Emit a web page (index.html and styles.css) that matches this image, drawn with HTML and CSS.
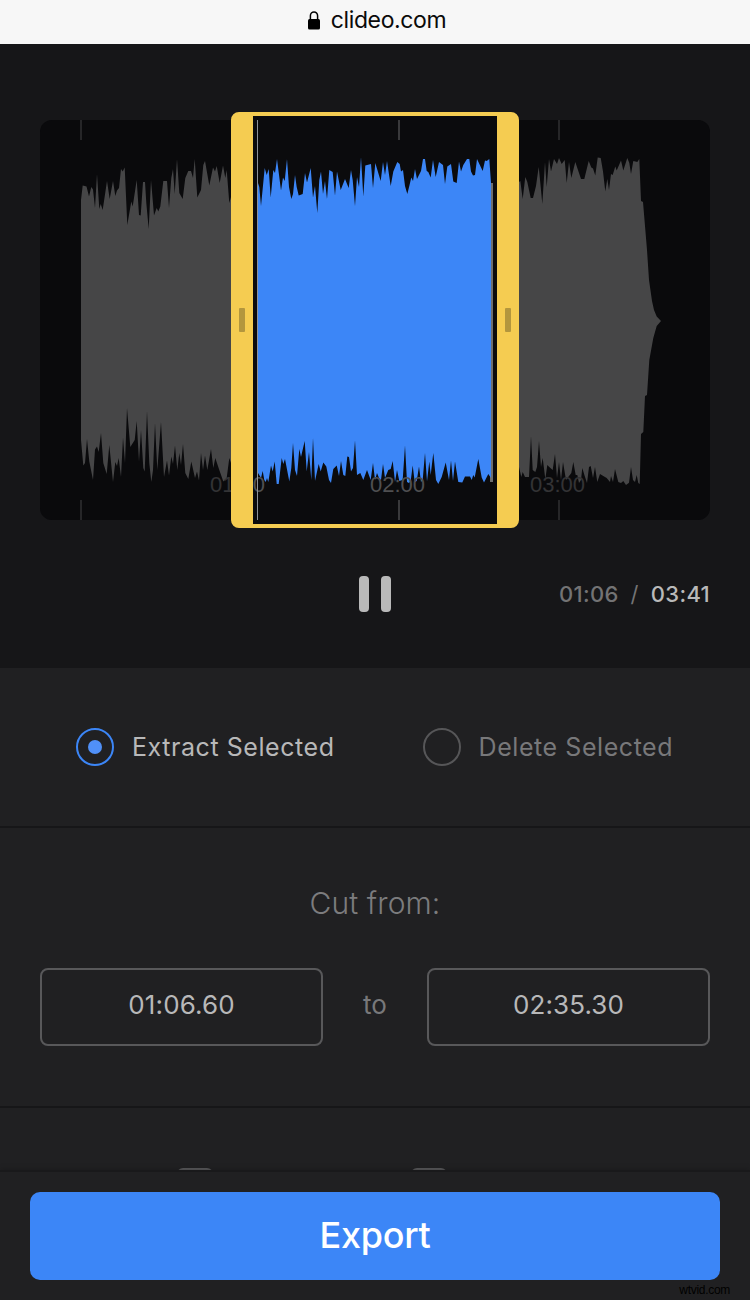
FILE: index.html
```html
<!DOCTYPE html>
<html lang="en">
<head>
	<meta charset="utf-8">
	<title>Cut audio</title>
	<link rel="stylesheet" href="styles.css">
</head>
<body>

<header class="address">
	<svg class="lock" width="12" height="19" viewBox="0 0 12 19">
		<path d="M2.4 9V4.8a3.6 3.9 0 0 1 7.2 0V9" fill="none" stroke="#000" stroke-width="1.5"/>
		<rect x="0" y="8" width="12" height="10.4" rx="1.5"/>
	</svg>
	<span>clideo.com</span>
</header>

<section class="editor">
	<div class="track">
		<svg class="wave" width="670" height="400" viewBox="40 120 670 400">
			<!-- grid -->
			<path class="tick" d="M81 120v20M81 500v20M399 120v20M399 500v20M559 120v20M559 500v20"/>

			<!-- before selection -->
			<path class="rest" d="M81 321V200L82.7 185.5 86.5 186.5 89 196.5 91.3 187 93 189.5 95 208 97 174 99.3 209 100.7 204 102.7 210 107 181 109.7 199 113 181 115.3 196 117 190.5 119 188 121 169 122.7 171.5 124.7 167.5 127.3 225 131.3 201.5 132.7 206.5 136.7 180 139 215 140.7 215.5 143 182 145 182 146.3 203 148.7 229 151 180 154 215.5 156.7 208 158.3 211.5 160.3 206.5 163.3 181 167 181 169 208 171.3 178 173 169 174.7 194 177 159 179.3 193 182.7 199 185.3 178 188.3 171 191 171 193 178 194.7 159 197.3 197.5 201 190 203.3 165 205 161 209.3 185.5 213 167.5 215 171.5 216.7 166 219.7 183 223 165.5 225.3 178 226.7 170 229.3 203 231 197 240 180V321Z"/>
			<path class="rest" d="M81 321V440L83.3 465.5 85 463 87 439 89.3 461.5 93 480 95 449.5 97 446.5 98.7 452 101 433 103.3 463 106.7 474 109.3 445 113 482 115.3 462 117 466 118.7 458 121 477 123 437.5 125 463 127 408 130.3 447 134.7 440 136.7 421 139 461.5 141 430 143.3 468 144.7 471.5 147 411 149.3 463 151.3 482 153 470 155 423 157.3 470 161 422 164 477 167 460.5 169 475.5 171.3 456.5 173 464 175 445.5 177.3 470 179.3 453 181 465 183 444 185.3 473 188.3 479 191.3 461.5 195 478 197 471.5 199 480.5 201 453 203 470 205 455.5 207.3 470 211 449 213.3 468 215.3 458 219.3 470 223.3 481.5 226.7 478 229.3 458 231 463 240 470V321Z"/>

			<!-- after selection -->
			<path class="rest" d="M510 321V190L519 182 520.3 181 522.7 199 525.3 177 527.3 182 530.7 198 533 198 536 186 538.7 167 540.7 187 542.3 204 545 162 546.7 187 549 159 551 171.5 554 159 557 164 559 158 561.7 164 564.7 160 566.7 183 569 162 571.3 178 575.3 162 581 179 584.3 179 588.7 161 591.3 167.5 593 168.5 595.3 175.5 597.7 157.5 600.7 158 603 171.5 605.3 191.5 607.3 179 609 190 611 174 612.7 175 615.3 166.5 616.7 170.5 621 160.5 623.3 170.5 627.3 158 629.3 163 631 174 633.3 161 637.3 162 639.3 159 641 201 643 202 647 250 649 280 652 301 654 310 656.7 316.5 661 321Z"/>
			<path class="rest" d="M661 321L656.7 326 653.3 338 649.3 360 647 395 645 396 643.3 432 641 434 639.7 484 638.3 483 636.7 475 635 482 633 480 631 467 629 482.7 626 485 623.3 481 621 483 618.3 482 615 469 613 482 611 476 610 482 606.7 478 603.3 476 600 474 597.3 482 595 467 593 478 590.7 466 589 467 587 483 584.7 476 582.3 468 581 480 579 483 577.3 475 575.7 475 573.3 462 571.3 473 569 476 566 480 563 462 561 480 559 462 557 478 555 454 552.7 470 549.3 467 547.3 465 545.3 479 542.7 458 541 467 539 441 537 467 535.3 472 532.7 470 531 436 529 477 525 477 522.7 472 521.3 477 519 467 510 470V321Z"/>

			<!-- selection -->
			<path class="rest" d="M490 183H493V482H490Z"/>
			<path class="picked" d="M257 321V183L258 183 259.3 187 261 206 264.7 168 266.7 175 268.7 169 270.7 197.5 273.3 170 275 173 277 159 281 190.5 283 177.5 284.7 181 287 159 289 187 291.3 199 293 194 295 175 296.7 187 298.7 195.5 302.7 194 305 173 307 182.5 310.7 168 313 197.5 315 186 317.3 213 319.3 180 321 171.5 323 194 325 181 327 199 329.3 170 332.7 172 335 195.5 337 171.5 340.7 190 345 179 348.7 188 351 170 352.7 180 355 206 357 177 359 187 361 157 363.3 196.5 365.3 165.5 371 164 373 188 375.3 163 380.7 181 383 162 385 175 387 161 390.7 186 393.3 171.5 397.3 162 399.7 164 401 171.5 403 170 405 186 407.3 194 409.3 186 411.3 177.5 413 181 415 169 417 179 421 171 423 159 425 159 426.7 171 428.3 172 430.7 177.5 433 160 435.7 177 439 162 443 165 445 184 447.3 166.5 451 164 453.3 181.5 456.7 183 459 161.5 461 171.5 463.3 165 467 159 469.3 159 471 171.5 473 175.5 475 175 477 159 482.7 171 485 160.5 486.7 161 489.3 159 491 183V321Z"/>
			<path class="picked" d="M257 321V474L258 473 261 478 262.7 471 264.3 480 265.7 482 267 478 268.3 482 271 465.5 272.7 471.5 274.7 461.5 276.7 484 278.7 484 281.7 458 283.3 464 285 459 289.3 481.5 291.3 468 293 443 295 470 297 476 299.3 449 301 457 304.7 441 306.7 471.5 309 452 311.3 480 313 438 315 481 318.7 464 320.7 471.5 323.3 462.5 326.3 466.5 329 480 331 483 333.3 469 336.7 465.5 339 476 341 461 343.3 475 345.3 476 347.3 456.5 349 457 351 471.5 353 468 355 440.5 357 475 360.3 473 363.3 480 367 470 370.7 480 373 463 375 480 377 473 379 478 381 480 383 464 385 478 388.3 470 390.7 469 392.7 461 395 482 397 470 399.3 481 402.7 480 405 445.5 407 482 409 483 410.7 481 412.7 465.5 414.7 482 416.7 481 419 466.5 421 482 422.7 480 425 453 427 481.5 429.3 461.5 430.7 475 433.3 453 436 480 438.3 484 441.7 477 445.7 462.5 449 480 451 460.5 453 481 455 461.5 458.3 482 462.3 482.5 465 476.5 470 476.5 471.7 480 473.3 475 474.7 477.5 478.3 459 481.7 477.5 484 482.5 488.3 474 491 478V321Z"/>

			<text class="mark" x="210" y="492">01:00</text>
			<text class="mark" x="370" y="492">02:00</text>
			<text class="mark" x="530" y="492">03:00</text>

			<rect class="shade" x="40" y="120" width="200" height="400"/>
			<rect class="shade" x="510" y="120" width="200" height="400"/>
		</svg>
		<div class="playhead"></div>
		<div class="selection">
			<div class="handle"></div>
			<div class="handle"></div>
		</div>
	</div>

	<div class="player">
		<div class="pause"><i></i><i></i></div>
		<div class="time"><span>01:06</span><span class="slash">/</span><span class="total">03:41</span></div>
	</div>
</section>

<section class="modes">
	<div class="mode active"><span class="radio"></span><span>Extract Selected</span></div>
	<div class="mode"><span class="radio"></span><span>Delete Selected</span></div>
</section>

<section class="range">
	<div class="range-title">Cut from:</div>
	<div class="range-row">
		<div class="field">01:06.60</div>
		<div class="to">to</div>
		<div class="field">02:35.30</div>
	</div>
</section>

<section class="fades">
	<span class="check"></span>
	<span class="check"></span>
</section>

<footer class="bottom">
	<div class="export">Export</div>
	<div class="credit">wtvid.com</div>
</footer>

</body>
</html>
```
FILE: styles.css
```css
* {
	box-sizing: border-box;
}

body {
	margin: 0;
	width: 750px;
	height: 1300px;
	overflow: hidden;
	background-color: #202022;
	font-family: Inter, "Liberation Sans", sans-serif;
	color: #b8b8b9;
}

.address {
	height: 44px;
	padding: 0 0 4px 4px;
	display: flex;
	justify-content: center;
	align-items: center;
	gap: 11px;
	background-color: #f7f7f7;
	color: #0a0a0a;
	font-size: 23px;
	letter-spacing: -0.4px;
}

.editor {
	height: 624px;
	padding: 76px 40px 0;
	background-color: #161618;
}

.track {
	position: relative;
	height: 400px;
	border-radius: 12px;
	background-color: #0b0b0d;
}

.wave {
	display: block;
	border-radius: 12px;
}

.tick {
	stroke: #39393b;
	stroke-width: 2;
}

.rest {
	fill: #6f6f6f;
}

.picked {
	fill: #3c86f7;
}

.mark {
	fill: #4f4f51;
	font-family: "Liberation Sans", sans-serif;
	font-size: 22px;
}

.shade {
	fill: #0b0b0d;
	opacity: 0.4;
}

/* frame over the waveform */
.selection {
	position: absolute;
	left: 191px;
	top: -8px;
	width: 288px;
	height: 416px;
	display: flex;
	justify-content: space-between;
	align-items: center;
	border: solid #f5cc51;
	border-width: 4px 22px;
	border-radius: 8px;
	box-shadow: inset 0 4px #0b0b0d, inset 0 -4px #0b0b0d;
}

.handle {
	width: 6px;
	height: 24px;
	margin: 0 -14px;
	border-radius: 1px;
	background-color: #b3963d;
}

.playhead {
	position: absolute;
	left: 217px;
	top: 0;
	width: 1px;
	height: 400px;
	background-color: #8d9096;
}

.player {
	height: 148px;
	display: grid;
	grid-template-columns: 1fr auto 1fr;
	align-items: center;
}

.pause {
	grid-column: 2;
	display: flex;
	gap: 12px;
}

.pause i {
	width: 10px;
	height: 36px;
	border-radius: 4px;
	background-color: #b9b9b9;
}

.time {
	display: flex;
	justify-content: flex-end;
	gap: 12px;
	font-size: 22px;
	font-weight: 500;
	letter-spacing: 0.3px;
	color: #737374;
}

.slash {
	font-weight: 400;
}

.total {
	color: #b9b9b9;
}

.modes {
	height: 160px;
	padding-left: 76px;
	display: flex;
	align-items: center;
	gap: 88px;
	border-bottom: 2px solid #161618;
	font-size: 25px;
	letter-spacing: 0.56px;
}

.mode {
	display: flex;
	align-items: center;
	gap: 18px;
	color: #78787a;
}

.mode.active {
	color: #b8b8b9;
}

.radio {
	width: 38px;
	height: 38px;
	display: flex;
	justify-content: center;
	align-items: center;
	border: 2px solid #565658;
	border-radius: 50%;
}

.active .radio {
	border-color: #3c86f7;
}

.active .radio::after {
	content: "";
	width: 14px;
	height: 14px;
	border-radius: 50%;
	background-color: #5090f8;
}

.range {
	height: 280px;
	padding: 56px 40px 0;
	border-bottom: 2px solid #161618;
}

.range-title {
	height: 40px;
	line-height: 38px;
	text-align: center;
	font-size: 30px;
	font-weight: 300;
	letter-spacing: 0.1px;
	color: #7c7c7e;
}

.range-row {
	margin-top: 44px;
	display: flex;
}

.field {
	width: 283px;
	height: 78px;
	line-height: 69px;
	border: 2px solid #58585a;
	border-radius: 8px;
	text-align: center;
	font-size: 26px;
	letter-spacing: 0.1px;
}

.to {
	flex: 1;
	line-height: 74px;
	text-align: center;
	font-size: 26px;
	color: #78787a;
}

.fades {
	height: 62px;
	padding: 60px 0 0 177px;
	display: flex;
	gap: 198px;
	overflow: hidden;
}

.check {
	width: 36px;
	height: 36px;
	flex: none;
	border: 2px solid #565658;
	border-radius: 6px;
}

.bottom {
	position: relative;
	height: 130px;
	padding: 20px 30px 0;
	border-top: 2px solid #19191b;
	background-color: #202022;
	box-shadow: 0 0 6px rgba(0, 0, 0, 0.25);
}

.export {
	height: 88px;
	line-height: 87px;
	border-radius: 10px;
	background-color: #3c86f7;
	color: #fff;
	text-align: center;
	font-size: 36px;
	font-weight: 500;
	letter-spacing: -0.3px;
}

.credit {
	position: absolute;
	right: 20px;
	bottom: 3px;
	font-family: "Liberation Sans", sans-serif;
	font-size: 12px;
	line-height: 14px;
	letter-spacing: -0.3px;
	color: #000;
}
```
